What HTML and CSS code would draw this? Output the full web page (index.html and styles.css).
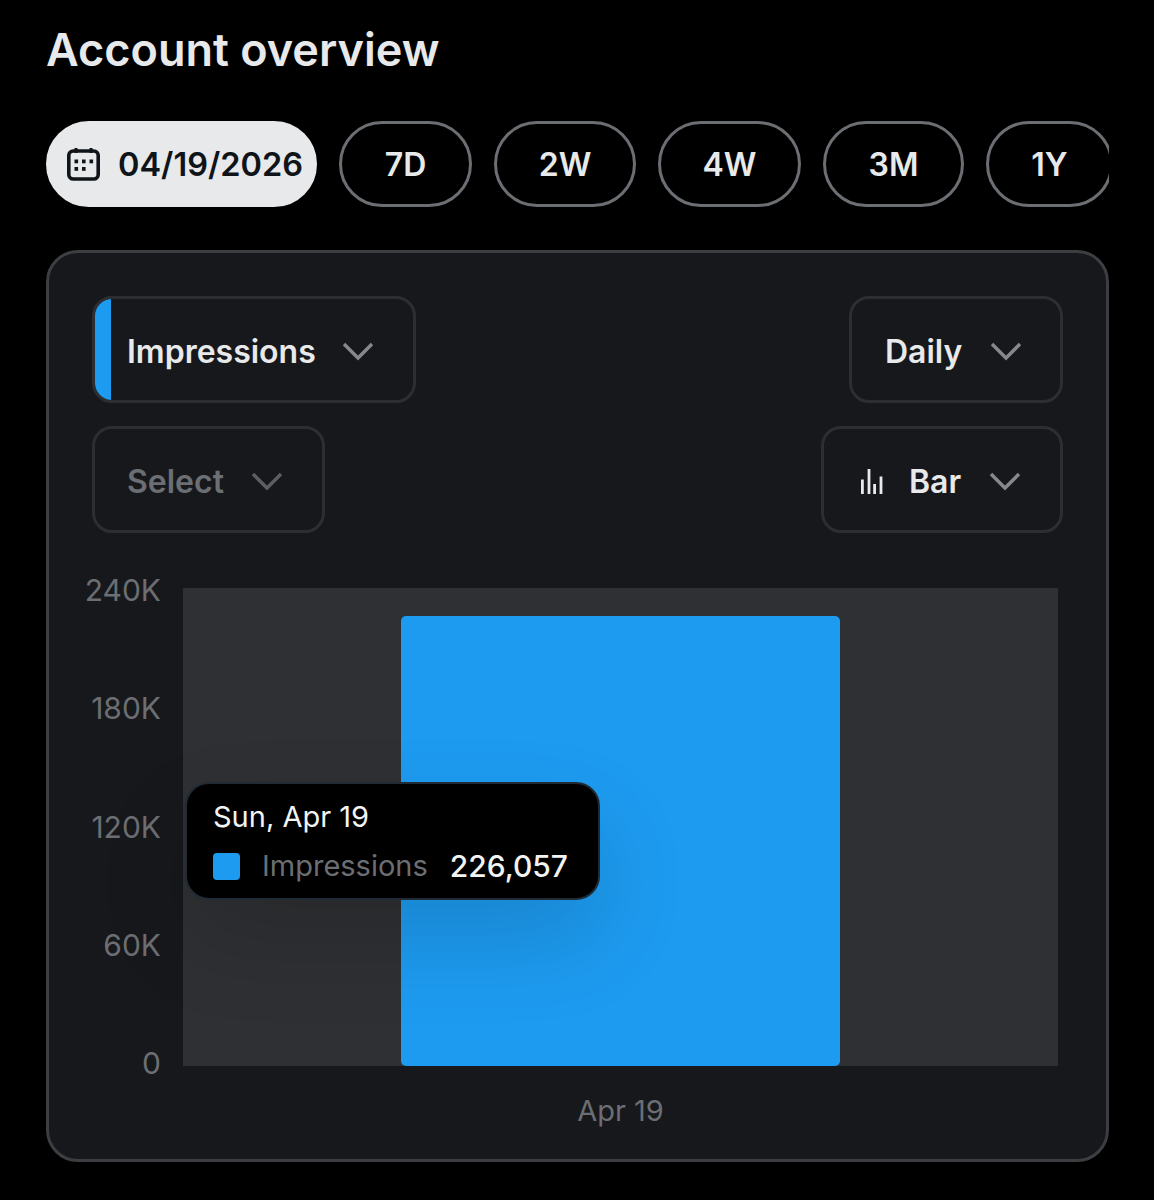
FILE: index.html
```html
<!DOCTYPE html>
<html lang="en">
<head>
  <meta charset="UTF-8" />
  <title>Account overview</title>
  <link rel="stylesheet" href="styles.css">
</head>
<body>
  <div class="container">
    <h1>Account overview</h1>

    <div class="ranges">
      <button class="pill active">
        <svg class="cal-icon" viewBox="0 0 33 34" width="33" height="34" fill="none" stroke="currentColor" stroke-width="3.600">
          <rect x="1.800" y="4" width="29.400" height="28" rx="4.500"/>
          <path d="M9 1v5M24 1v5" stroke-width="3"/>
          <g fill="currentColor" stroke="none">
            <rect x="7.500" y="12.500" width="3.600" height="3.800"/>
            <rect x="15" y="12.500" width="3.600" height="3.800"/>
            <rect x="22.500" y="12.500" width="3.600" height="3.800"/>
            <rect x="7.500" y="20" width="3.600" height="3.800"/>
            <rect x="15" y="20" width="3.600" height="3.800"/>
          </g>
        </svg>
        04/19/2026
      </button>
      <button class="pill w-7d">7D</button>
      <button class="pill w-2w">2W</button>
      <button class="pill w-4w">4W</button>
      <button class="pill w-3m">3M</button>
      <button class="pill w-1y">1Y</button>
    </div>

    <div class="card">
      <div class="filters">
        <div class="filter-row">
          <div class="select metric">
            <span class="metric-mark"></span>
            <span>Impressions</span>
            <svg class="chevron" viewBox="0 0 32 20"><path d="M2 3l14 14L30 3"/></svg>
          </div>
          <div class="select daily">
            <span>Daily</span>
            <svg class="chevron" viewBox="0 0 32 20"><path d="M2 3l14 14L30 3"/></svg>
          </div>
        </div>
        <div class="filter-row">
          <div class="select muted">
            <span>Select</span>
            <svg class="chevron" viewBox="0 0 32 20"><path d="M2 3l14 14L30 3"/></svg>
          </div>
          <div class="select kind">
            <svg class="bar-icon" viewBox="0 0 22 25" width="22" height="25" stroke="currentColor" stroke-width="2.800">
              <path d="M1.400 10.600V25M8 0v25M13.600 15v10M20 7.600V25"/>
            </svg>
            <span>Bar</span>
            <svg class="chevron" viewBox="0 0 32 20"><path d="M2 3l14 14L30 3"/></svg>
          </div>
        </div>
      </div>

      <div class="chart">
        <div class="y-axis">
          <span>240K</span>
          <span>180K</span>
          <span>120K</span>
          <span>60K</span>
          <span>0</span>
        </div>
        <div class="plot">
          <div class="bar"></div>
        </div>
        <div class="tooltip">
          <div class="tip-date">Sun, Apr 19</div>
          <div class="tip-row">
            <span class="tip-swatch"></span>
            <span class="tip-name">Impressions</span>
            <span class="tip-value">226,057</span>
          </div>
        </div>
      </div>
      <div class="x-label">Apr 19</div>
    </div>
  </div>
</body>
</html>
```
FILE: styles.css
```css
* {
  box-sizing: border-box;
}

body {
  margin: 0;
  background: #000;
  color: #e7e9ea;
  font-family: Inter, "Liberation Sans", sans-serif;
}

.container {
  width: 1154px;
  height: 1200px;
  padding: 0 45px 0 46px;
  overflow: hidden;
}

h1 {
  margin: 0;
  padding-top: 24px;
  height: 121px;
  font-size: 45px;
  line-height: 52px;
  font-weight: 600;
}

.ranges {
  display: flex;
  gap: 22px;
  height: 86px;
  overflow: hidden;
}

.pill {
  flex: none;
  height: 86px;
  display: flex;
  align-items: center;
  justify-content: center;
  background: #000;
  color: #e7e9ea;
  border: 3px solid #6b6e72;
  border-radius: 43px;
  font-family: inherit;
  font-size: 32px;
  font-weight: 600;
  padding: 0;
}

.pill.active {
  width: 271px;
  gap: 18px;
  justify-content: flex-start;
  padding-left: 18px;
  background: #e7e9ea;
  border-color: #e7e9ea;
  color: #0f1419;
  font-size: 32.500px;
}

.w-7d { width: 133px; }
.w-2w { width: 142px; }
.w-4w { width: 143px; }
.w-3m { width: 141px; }
.w-1y { width: 127px; }

.card {
  margin-top: 43px;
  height: 912px;
  background: #17181c;
  border: 3px solid #3c3e42;
  border-radius: 32px;
  padding: 43px 43px 0;
}

.filters {
  display: flex;
  flex-direction: column;
  gap: 23px;
}

.filter-row {
  display: flex;
  justify-content: space-between;
}

.select {
  height: 107px;
  display: flex;
  align-items: center;
  padding: 3px 0 0 32px;
  border: 3px solid #2c2e33;
  border-radius: 20px;
  font-size: 32px;
  font-weight: 600;
  color: #e7e9ea;
}

.metric {
  width: 324px;
  position: relative;
  overflow: hidden;
  gap: 26px;
}

.metric-mark {
  position: absolute;
  left: 0;
  top: 0;
  bottom: 0;
  width: 16px;
  background: #1d9bf0;
}

.daily {
  width: 214px;
  padding-left: 33px;
  gap: 28px;
}

.muted {
  width: 233px;
  color: #6b6e72;
  gap: 27px;
}

.kind {
  width: 242px;
  padding-left: 37px;
  gap: 26px;
}

.kind .chevron {
  margin-left: 2px;
}

.chevron {
  width: 32px;
  height: 20px;
  flex: none;
  fill: none;
  stroke: #85888c;
  stroke-width: 3.400;
}

.muted .chevron {
  stroke: #5b5e62;
}

.bar-icon {
  color: #e7e9ea;
  flex: none;
}

.chart {
  position: relative;
  display: flex;
  margin-top: 55px;
  height: 478px;
}

.y-axis {
  width: 99px;
  margin: -14px 0 -13px -30px;
  display: flex;
  flex-direction: column;
  justify-content: space-between;
  align-items: flex-end;
  font-size: 30px;
  line-height: 32px;
  color: #6b6e72;
  flex: none;
}

.plot {
  flex: none;
  margin-left: 22px;
  width: 875px;
  height: 478px;
  background: #2f3033;
  display: flex;
  justify-content: center;
  align-items: flex-end;
}

.bar {
  width: 439px;
  height: 450px;
  background: #1d9bf0;
  border-radius: 5px;
}

.tooltip {
  position: absolute;
  left: 93px;
  top: 194px;
  width: 415px;
  height: 118px;
  padding: 17px 26px;
  background: #000;
  border: 2px solid #202b36;
  border-radius: 24px;
  box-shadow: 0 40px 90px rgba(0, 0, 0, 0.14);
  font-size: 29px;
}

.tip-date {
  line-height: 32px;
  color: #f2f3f3;
}

.tip-row {
  display: flex;
  align-items: center;
  margin-top: 17px;
  line-height: 32px;
}

.tip-swatch {
  width: 27px;
  height: 27px;
  border-radius: 4px;
  background: #1d9bf0;
  margin-right: 22px;
}

.tip-name {
  color: #6b6e72;
  margin-right: 22px;
}

.tip-value {
  color: #f2f3f3;
  font-weight: 500;
  font-size: 30px;
}

.x-label {
  margin-top: 28px;
  text-align: center;
  padding-left: 89px;
  margin-left: -3px;
  font-size: 29px;
  line-height: 34px;
  color: #6b6e72;
}
```
